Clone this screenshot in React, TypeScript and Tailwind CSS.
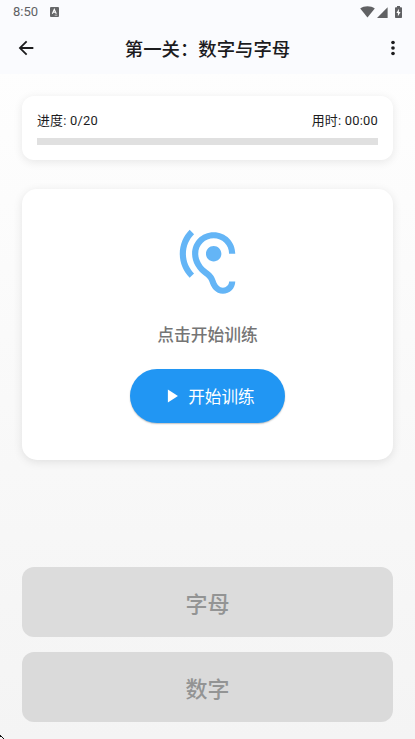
import { clsx } from 'clsx'

const ANSWERS = ['字母', '数字']

function StatusBar() {
  return (
    <div className="flex h-6 items-center pl-[13px] pr-[13px] text-[#606164]">
      <span className="text-[13px] leading-6">8:50</span>
      <svg className="ml-[12px] h-[10px] w-[9px]" viewBox="0 0 9 10">
        <rect width="9" height="10" rx="1" fill="#666769" />
        <path d="M2.3 6.7L4.3 2.4L6.3 6.7M3.1 5.3H5.5" stroke="#fff" strokeWidth="1.1" fill="none" />
        <path d="M4.7 8.2H7.3" stroke="#fff" strokeWidth=".6" />
      </svg>
      <div className="ml-auto flex items-center">
        <svg className="h-3 w-[15px]" viewBox="0 0 15 12" fill="#606164">
          <path d="M7.5 11.5L.2 2.5C2.2 1 4.8.2 7.5.2s5.3.8 7.3 2.3z" />
        </svg>
        <svg className="ml-[2px] h-[11px] w-[11px]" viewBox="0 0 11 11" fill="#606164">
          <path d="M0 11L10.6.3V11z" />
        </svg>
        <svg className="ml-[7px] h-3 w-[7px]" viewBox="0 0 7 12">
          <path d="M2 0h3v1.2h1.2q.8 0 .8.8v9.2q0 .8-.8.8H.8Q0 12 0 11.2V2q0-.8.8-.8H2z" fill="#606164" />
          <path d="M3.9 2.7L1.4 7h1.5v3.2L5.6 5.9H3.9z" fill="#fff" />
        </svg>
      </div>
    </div>
  )
}

function Header() {
  return (
    <header className="h-[74px] shrink-0 bg-[#fafbfe]">
      <StatusBar />
      <div className="flex h-12 items-center justify-between pl-[15px] pr-[11px]">
        <svg className="h-[22px] w-[22px]" viewBox="0 0 24 24" fill="#1c1c1e">
          <path d="M20 11H7.83l5.59-5.59L12 4l-8 8 8 8 1.41-1.41L7.83 13H20z" />
        </svg>
        <h1 className="mr-1 pt-1 text-[18.4px] leading-6 font-medium text-[#1c1c1e]">第一关：数字与字母</h1>
        <svg className="h-[22px] w-[22px]" viewBox="0 0 24 24" fill="#1c1c1e">
          <circle cx="12" cy="6" r="2" />
          <circle cx="12" cy="12" r="2" />
          <circle cx="12" cy="18" r="2" />
        </svg>
      </div>
    </header>
  )
}

export default function App() {
  return (
    <div className="relative flex h-[739px] w-full flex-col overflow-hidden bg-linear-to-b from-white to-[#f4f4f4] font-[Roboto,'Noto_Sans_CJK_SC',sans-serif]">
      <Header />

      <main className="flex flex-1 flex-col px-[22px] pt-[22px] pb-[17px]">
        {/* Progress */}
        <section className="h-16 rounded-[12px] bg-white px-[15px] pt-4 shadow-[0_2px_10px_rgba(0,0,0,0.09)]">
          <div className="flex justify-between text-[12.9px] leading-[18px] tracking-[0.23px] text-[#1c1c1e]">
            <span>进度: 0/20</span>
            <span>用时: 00:00</span>
          </div>
          <div className="mt-2 h-[7px] bg-[#e0e0e0]" />
        </section>

        {/* Training */}
        <section className="mt-[29px] flex h-[271px] flex-col items-center rounded-[15px] bg-white pt-[37px] shadow-[0_2px_10px_rgba(0,0,0,0.1)]">
          <svg className="h-[74px] w-[75px]" viewBox="0 0 24 24" fill="#64b5f6">
            <path d="M17 20c-.29 0-.56-.06-.76-.15-.71-.37-1.21-.88-1.71-2.38-.51-1.56-1.47-2.29-2.39-3-.79-.61-1.61-1.24-2.32-2.53C9.29 10.98 9 9.93 9 9c0-2.8 2.2-5 5-5s5 2.2 5 5h2c0-3.93-3.07-7-7-7S7 5.07 7 9c0 1.26.38 2.65 1.07 3.9.91 1.65 1.98 2.48 2.85 3.15.81.62 1.39 1.07 1.71 2.05.6 1.82 1.37 2.84 2.73 3.55.51.23 1.07.35 1.64.35 2.21 0 4-1.79 4-4h-2c0 1.1-.9 2-2 2zM7.64 2.64L6.22 1.22C4.23 3.21 3 5.96 3 9s1.23 5.79 3.22 7.78l1.41-1.41C6.01 13.74 5 11.49 5 9s1.01-4.74 2.64-6.36zM11.5 9c0 1.38 1.12 2.5 2.5 2.5s2.5-1.12 2.5-2.5-1.12-2.5-2.5-2.5-2.5 1.12-2.5 2.5z" />
          </svg>
          <p className="mt-[23px] text-[16.8px] leading-6 font-medium text-[#757575]">点击开始训练</p>
          <button className="mt-[21.5px] flex h-[54.5px] w-[154.5px] items-center rounded-full bg-[#2196f3] pl-[31px] text-[16.6px] text-white shadow-[0_1px_1.5px_rgba(0,0,0,0.25)]">
            <svg className="h-[22px] w-[22px]" viewBox="0 0 24 24" fill="currentColor">
              <path d="M7.5 5v14l11-7z" />
            </svg>
            <span className="ml-[5px] pt-[5px]">开始训练</span>
          </button>
        </section>

        {/* Answers */}
        <div className="mt-auto flex flex-col gap-[15px]">
          {ANSWERS.map((label, i) => (
            <button
              key={label}
              disabled
              className={clsx(
                'h-[70px] rounded-[12px] pt-[4px] text-[22px] font-medium text-[#939494]',
                i === 0 ? 'bg-[#dcdcdc]' : 'bg-[#dadada]',
              )}
            >
              {label}
            </button>
          ))}
        </div>
      </main>

      {/* Pointer edge in the bottom corner */}
      <svg className="absolute bottom-0 left-0 h-1 w-1" viewBox="0 0 4 4" shapeRendering="crispEdges">
        <path d="M0 0h1v2H0zM1 1h1v1H1zM2 2h1v1H2zM3 3h1v1H3z" fill="#111" />
      </svg>
    </div>
  )
}
